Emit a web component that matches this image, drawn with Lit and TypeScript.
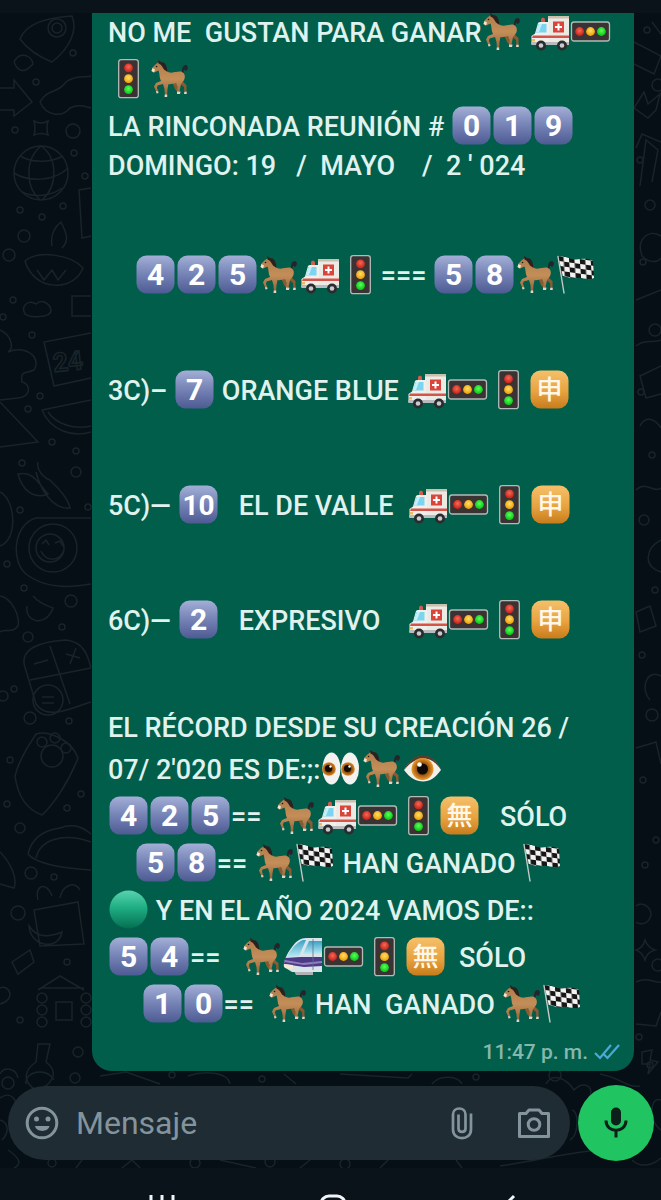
import { LitElement, html, svg, css } from "lit";
import { customElement } from "lit/decorators.js";

const KEYCAPS = ["0", "1", "2", "4", "5", "7", "8", "9", "10"];

/** Picture codes used inside braces in the message source, with their spoken names. */
const EMOJI: Record<string, string> = {
  horse: "caballo",
  amb: "ambulancia",
  hl: "semáforo horizontal",
  vl: "semáforo",
  flag: "bandera a cuadros",
  eyes: "ojos",
  eye: "ojo",
  green: "círculo verde",
  train: "monorriel",
};

const MESSAGE: string[][] = [
  [
    "NO ME  GUSTAN PARA GANAR{horse} {amb}{hl}",
    "{vl}{horse}",
    "LA RINCONADA REUNIÓN # {0}{1}{9}",
    "DOMINGO: 19   /  MAYO    /  2 ' 024",
  ],
  ["    {4}{2}{5}{horse}{amb}{vl}=== {5}{8}{horse}{flag}"],
  ["3C)– {7} ORANGE BLUE {amb}{hl}{vl}{申}"],
  ["5C)— {10}   EL DE VALLE  {amb}{hl}{vl}{申}"],
  ["6C)— {2}   EXPRESIVO    {amb}{hl}{vl}{申}"],
  [
    "EL RÉCORD DESDE SU CREACIÓN 26 /",
    "07/ 2'020 ES DE:;:{eyes}{horse}{eye}",
    "{4}{2}{5}==  {horse}{amb}{hl}{vl}{無}   SÓLO",
    "    {5}{8}== {horse}{flag} HAN GANADO {flag}",
    "{green} Y EN EL AÑO 2024 VAMOS DE::",
    "{5}{4}==   {horse}{train}{hl}{vl}{無}  SÓLO",
    "     {1}{0}==  {horse} HAN  GANADO {horse}{flag}",
  ],
];

const sprite = html`
  <svg class="sprite" aria-hidden="true">
    <defs>
      <linearGradient id="gKey" x2="0" y2="1">
        <stop offset="0" stop-color="#a3afd6" /><stop offset=".5" stop-color="#7482b5" /><stop offset="1" stop-color="#4d5b93" />
      </linearGradient>
      <linearGradient id="gSq" x2="0" y2="1">
        <stop offset="0" stop-color="#f5c06a" /><stop offset=".55" stop-color="#e9a340" /><stop offset="1" stop-color="#c87c1b" />
      </linearGradient>
      <linearGradient id="gGreen" x2="0" y2="1">
        <stop offset="0" stop-color="#58d3ae" /><stop offset=".45" stop-color="#1fae83" /><stop offset="1" stop-color="#046f52" />
      </linearGradient>
      <linearGradient id="gHorse" x2="0" y2="1">
        <stop offset="0" stop-color="#b07c4b" /><stop offset=".5" stop-color="#c48e58" /><stop offset="1" stop-color="#94633a" />
      </linearGradient>
      <linearGradient id="gGlass" x2="0" y2="1">
        <stop offset="0" stop-color="#3f9fc4" /><stop offset="1" stop-color="#b6ecf5" />
      </linearGradient>
      <radialGradient id="gIris"><stop offset="0" stop-color="#5b2b06" /><stop offset=".5" stop-color="#8a4a0c" /><stop offset="1" stop-color="#dd8a23" /></radialGradient>
      <radialGradient id="gRed" cy=".4"><stop offset="0" stop-color="#f46a55" /><stop offset="1" stop-color="#cf2a20" /></radialGradient>
      <radialGradient id="gYel" cy=".4"><stop offset="0" stop-color="#ffe066" /><stop offset="1" stop-color="#f1a70f" /></radialGradient>
      <radialGradient id="gGrn" cy=".4"><stop offset="0" stop-color="#5dff58" /><stop offset="1" stop-color="#10cf1e" /></radialGradient>
      <pattern id="check" width="11" height="9.6" patternUnits="userSpaceOnUse" patternTransform="translate(2 5) rotate(8) skewX(12)">
        <rect width="11" height="9.6" fill="#f2f2f0" />
        <rect width="5.5" height="4.8" fill="#161616" /><rect x="5.5" y="4.8" width="5.5" height="4.8" fill="#161616" />
      </pattern>
      <symbol id="horse" viewBox="0 0 41 47">
        <path d="M33 17C33 13 34 10 37 10C40 11 39 15 37 16C36 16 36 14 35 15C34 16 35 18 34 19Z" fill="#26242a" />
        <path d="M33 26L37.500 30L37.500 38H35.500L35 32L30 28ZM23 27L27 28L29 33L31.500 37L30 39L26 34Z" fill="#8a5a33" />
        <path d="M10 7L12 9C15 11 17 15 19 17C24 19 29 15.500 33 17C36.500 18.500 36.500 23 34.500 26L32 29L31 34L30 38H28L28.500 32L27 28C24 29 21 29.500 19.500 29L18.500 34L18 41H16L15.500 34L14 29L8.500 30.500L8 33L9.500 36.500L7.500 37.500L5 31.500L7 28L12 26C10 22 11 19 9.500 15.500L5 17.500L2.500 16L3.500 12.500L7 9Z" fill="url(#gHorse)" />
        <path d="M9 5L12 7C17 7 18 12 18.500 17L15 14.500C13.500 12 12.500 9.500 9.500 8.500Z" fill="#2c211e" />
        <path d="M3.500 13L6 14.500L5 17.500L2.500 16Z" fill="#eee6da" /><circle cx="7.500" cy="11.500" r=".8" fill="#1c1512" />
        <path d="M7 36L9.200 36.500L9.500 38L7.500 38.500ZM15.800 39.500H18.200V42H15.500ZM28 36.500L31.500 36.800L31 39H28ZM35.400 36.800H37.700V39H35Z" fill="#ded6cc" />
      </symbol>
      <symbol id="amb" viewBox="0 0 41 47">
        <path d="M12 11.500C12 9 16 9 16 11.500V15H12Z" fill="#d55b4c" />
        <path d="M19 8H40V36H19Z" fill="#eceae5" /><path d="M19 8H40V10.500H19Z" fill="#c9bfae" />
        <path d="M9 15Q10 14 11 14H20V37H3Q2 36 2.500 34V28L6 25.500Z" fill="#f1efec" />
        <path d="M9.500 16H17.500V24.500H7Z" fill="#7dd4ee" /><path d="M10 16H13L10 24H7Z" fill="#c2effa" />
        <path d="M24 13.500H35V24.500H24Z" fill="#d9453a" /><path d="M28.500 15.500H30.500V18H33V20H30.500V22.500H28.500V20H26V18H28.500Z" fill="#fff" />
        <path d="M4 27.500H40V30H3Z" fill="#d5544a" /><path d="M2.500 34H40V37H2.500Z" fill="#b9bcbf" /><path d="M3 31H6V33.500H3Z" fill="#f0b95b" />
        <circle cx="12" cy="37.500" r="5" fill="#2b2b2e" /><circle cx="33" cy="37.500" r="5" fill="#2b2b2e" />
        <circle cx="12" cy="37.500" r="2.300" fill="#c8cbd0" /><circle cx="33" cy="37.500" r="2.300" fill="#c8cbd0" />
      </symbol>
      <symbol id="vl" viewBox="0 0 41 47">
        <rect x="10.700" y="4.700" width="19.600" height="38" rx="2.500" fill="#3b3234" stroke="#b3bbb6" stroke-width="1.300" />
        <circle cx="20.500" cy="12.800" r="4.400" fill="url(#gRed)" /><circle cx="20.500" cy="23.700" r="4.400" fill="url(#gYel)" /><circle cx="20.500" cy="34.600" r="4.400" fill="url(#gGrn)" />
      </symbol>
      <symbol id="hl" viewBox="0 0 41 47">
        <rect x="1.500" y="14" width="38" height="19" rx="2.500" fill="#3b3234" stroke="#b3bbb6" stroke-width="1.300" />
        <circle cx="9.600" cy="23.500" r="4.400" fill="url(#gRed)" /><circle cx="20.500" cy="23.500" r="4.400" fill="url(#gYel)" /><circle cx="31.400" cy="23.500" r="4.400" fill="url(#gGrn)" />
      </symbol>
      <symbol id="flag" viewBox="0 0 41 47">
        <path d="M2.500 6C9 3.500 13 9 20 8.500C26 8 31 6.500 37 10L38 27C31 30 27 26 21 27C15 28 11 25 7 26Z" fill="url(#check)" />
        <path d="M2 5.500L8 42" stroke="#c5c8c6" stroke-width="1.400" stroke-linecap="round" />
      </symbol>
      <symbol id="eyes" viewBox="0 0 41 47">
        <ellipse cx="11.500" cy="23.500" rx="9" ry="16" fill="#f4f2f0" /><ellipse cx="30" cy="23.500" rx="9" ry="16" fill="#f4f2f0" />
        <circle cx="9" cy="24" r="6.800" fill="url(#gIris)" /><circle cx="28" cy="24" r="6.800" fill="url(#gIris)" />
        <circle cx="8.500" cy="23.500" r="3.600" fill="#150b06" /><circle cx="27.500" cy="23.500" r="3.600" fill="#150b06" />
        <circle cx="10.500" cy="21.500" r="1.200" fill="#fff" /><circle cx="29.500" cy="21.500" r="1.200" fill="#fff" />
      </symbol>
      <symbol id="eye" viewBox="0 0 41 47">
        <path d="M2 25C8 15 14 11 21 11S34 15 39 25C33 33 28 36.500 21 36.500S8 33 2 25Z" fill="#f3efe9" />
        <path d="M2 25C8 14 14 10.500 21 10.500S34 14 39 25C34 17 28 13.500 21 13.500S8 18 2 25Z" fill="#5a3b2b" />
        <circle cx="20.500" cy="24" r="11" fill="#df9028" /><circle cx="20.500" cy="24" r="10" fill="url(#gIris)" />
        <circle cx="20.500" cy="24" r="5.500" fill="#0f0a07" /><circle cx="17.500" cy="19.500" r="2.300" fill="#fff" />
      </symbol>
      <symbol id="green" viewBox="0 0 41 47"><circle cx="20.500" cy="23.500" r="19" fill="url(#gGreen)" /></symbol>
      <symbol id="train" viewBox="0 0 41 47">
        <path d="M12 38H31V42H14Z" fill="#aeb3b8" />
        <path d="M40 5V39H10L2 34C1 29 5 20 10 14C14 8 19 5 24 5Z" fill="#d9e3ea" />
        <path d="M21 7C15 9 9 16 5 24L17 23L24 7Z" fill="url(#gGlass)" /><path d="M27 8H40V21H21Z" fill="url(#gGlass)" />
        <path d="M3 25L18 24H40V33L22 34L2 31Z" fill="#4c3a86" /><path d="M3 27L20 30L40 28V30L22 32L2.500 29Z" fill="#8f7fc0" />
        <path d="M2 31L11 32L11 36L3 35Z" fill="#f2eccb" /><path d="M31 6V37" stroke="#5d6f8c" stroke-width=".8" />
      </symbol>
    </defs>
  </svg>
`;

const emoji = (code: string) => {
  if (KEYCAPS.includes(code)) {
    const size = code.length > 1 ? "digit pair" : "digit";
    return html`<svg class="emoji" viewBox="0 0 41 47"><rect x="1.500" y="4.500" width="38" height="38" rx="10" fill="url(#gKey)" /><text class=${size} x="20.500" y="34">${code}</text></svg>`;
  }
  if (code === "申" || code === "無") {
    return html`<svg class="emoji" viewBox="0 0 41 47"><rect x="1.500" y="4.500" width="38" height="38" rx="10" fill="url(#gSq)" /><text class="kanji" x="20.500" y="33">${code}</text></svg>`;
  }
  return html`<svg class="emoji" viewBox="0 0 41 47" role="img" aria-label=${EMOJI[code]}><use href="#${code}" /></svg>`;
};

const line = (source: string) =>
  html`<span class="line">${source
    .split(/(\{[^}]+\})/)
    .filter(Boolean)
    .map((part) => (part[0] === "{" ? emoji(part.slice(1, -1)) : part))}</span>`;

const DOTS = [
  [73, 53], [36, 82], [73, 131, 7], [15, 130], [74, 153], [85, 176], [20, 210], [42, 217], [63, 206], [24, 236, 6], [9, 255, 6], [13, 300],
  [32, 335], [3, 317], [40, 396], [28, 409], [52, 442], [76, 451], [76, 472, 5], [22, 463], [20, 510], [88, 507], [7, 564], [24, 588],
  [71, 601, 6], [28, 637, 5], [62, 627], [14, 689], [30, 718, 6], [69, 721], [3, 696, 5], [10, 760], [81, 794], [67, 808], [7, 804],
  [20, 828, 5], [31, 873, 6], [54, 877], [18, 913, 7], [67, 962], [20, 1020], [78, 1052, 5], [8, 1083, 6],
  [647, 30], [658, 85, 6], [640, 160], [650, 205, 5], [643, 262], [655, 330, 6], [641, 392], [652, 455], [644, 520, 5], [655, 590],
  [642, 655], [652, 715, 6], [643, 780], [656, 840], [645, 865], [658, 965, 6], [639, 1037], [650, 1065],
  [75, 1078, 5], [172, 1075], [262, 1079], [345, 1164, 5], [476, 1077], [555, 1075, 6], [52, 1163, 4], [195, 1163, 5], [270, 1162, 5],
];

const wallpaper = html`
  <svg class="wallpaper" viewBox="0 0 661 1200" preserveAspectRatio="xMidYMax slice" aria-hidden="true">
    ${DOTS.map(([x, y, r = 3]) => svg`<circle cx=${x} cy=${y} r=${r} />`)}
    <path d="M20 39C26 24 44 18 72 16C78 30 70 48 52 62C42 58 28 50 20 39ZM14 62C20 50 32 56 33 64C24 74 18 72 14 62" />
    <circle cx="57" cy="28" r="9" /><circle cx="57" cy="28" r="5" />
    <path d="M0 88H14V80L32 102L14 116V110H0M40 102C48 88 58 94 66 82C76 74 86 78 91 76M40 102C46 116 62 118 70 108C78 104 84 106 91 108" />
    <path d="M34 121Q41 125 48 121Q46 128 48 135Q41 132 34 135Q36 128 34 121Z" />
    <circle cx="41" cy="173" r="27" /><path d="M14 173C28 182 54 182 68 168M20 156C34 164 52 162 63 156M22 192C34 198 52 196 62 188M41 146C24 160 26 188 40 200M41 146C58 158 58 186 42 200" />
    <path d="M91 188L79 190L82 238L91 236M25 261C38 250 70 254 83 268C74 292 34 292 25 261ZM52 246C50 234 56 226 61 222C66 232 70 240 62 248M37 270L44 280L52 270L58 280L66 270" />
    <path d="M25 314C20 304 30 300 36 304C42 298 50 304 51 310C52 318 30 318 25 314ZM91 296H72V316H91" />
    <path d="M91 333L44 342L54 386L91 378M0 330C12 336 14 348 8 352C26 344 42 358 34 370C26 374 20 370 22 382C32 384 30 398 18 398L0 400M0 402L38 442L0 447" />
    <text class="day" x="54" y="372" transform="rotate(-6 54 372)">24</text>
    <path d="M42 410L91 400M42 410C50 430 72 438 91 432M48 412C56 424 74 430 91 426M38 462C36 470 44 478 50 480C58 488 68 498 70 508C52 510 40 488 36 472M18 474C34 470 40 486 48 494C34 500 22 490 18 474Z" />
    <path d="M0 492C16 500 18 540 0 546M91 518H36C14 524 10 560 26 574C44 588 70 588 91 584" /><circle cx="53" cy="548" r="24" /><circle cx="50" cy="548" r="14" />
    <path d="M42 544L46 540L49 545M55 543L60 541L63 546M41 551C46 562 60 562 64 550M33 596C40 604 48 606 53 608C46 628 24 622 27 606M0 596C12 598 20 616 18 626C12 634 6 628 0 632" />
    <path d="M24 664C22 650 36 642 66 640C84 642 88 656 91 668M24 664L36 704C48 722 76 706 91 702M50 646L70 704M30 680L91 668M34 664L48 660M66 654L80 658M76 648L70 664" />
    <circle cx="48" cy="700" r="15" /><path d="M42 697H54M42 703H54" />
    <path d="M15 776C20 756 30 744 36 734C48 730 72 740 78 758C68 784 52 806 42 815C28 810 18 798 15 776Z" /><circle cx="52" cy="756" r="11" /><circle cx="42" cy="742" r="5" /><circle cx="55" cy="738" r="5" /><circle cx="66" cy="748" r="5" />
    <path d="M28 854C32 836 46 830 60 828C76 822 86 830 91 834M28 854C36 864 60 868 91 870M36 858C40 840 62 832 91 842M0 852C10 862 18 878 14 888L0 884" />
    <path d="M34 910L78 902L84 944L40 946L34 910ZM60 898C62 886 74 880 80 890M38 900C34 886 46 880 52 896M29 926C38 940 52 936 62 932C58 952 30 946 29 926Z" />
    <path d="M12 962L30 950L34 962L18 974ZM38 990L60 976L84 990M40 988H84M56 1002H72V1020H56Z" /><circle cx="42" cy="998" r="5" /><circle cx="42" cy="1010" r="5" /><circle cx="42" cy="1022" r="5" /><circle cx="86" cy="998" r="5" /><circle cx="86" cy="1010" r="5" /><circle cx="86" cy="1022" r="5" />
    <path d="M38 1044L50 1044L46 1062C60 1072 52 1086 36 1090C22 1082 24 1070 36 1062ZM0 988C10 984 16 1000 0 1004" />
    <path d="M661 34L652 22M634 42L661 56L654 74L634 64M634 108L644 92L648 104L660 94L656 110L648 118ZM636 148L642 134L661 142M640 186L646 140L658 150L652 182" />
    <path d="M661 236C648 228 636 240 642 256C650 264 658 262 661 258M636 300L661 290M636 346C646 338 654 344 661 340M661 366L640 376L646 398L661 394M640 426C646 414 656 420 661 428M636 490C646 480 654 494 661 488M661 540C646 548 642 566 661 572M636 612L650 606L656 626L640 632ZM661 676C646 668 640 690 650 700M636 748L656 742L661 764" />
    <path d="M636 906C644 900 654 910 650 918C646 926 638 924 636 922M645 940Q648 948 655 950Q647 952 645 960Q642 952 636 950Q643 948 645 940ZM636 982C648 976 656 984 661 982M636 1024L656 1026L661 1012M642 1052L652 1050L650 1060L658 1062L648 1074L650 1064L642 1064Z" />
    <path d="M0 1074C4 1066 16 1068 18 1078M26 1084C24 1072 46 1066 54 1080M100 1076L126 1072L160 1084M188 1076C204 1070 228 1072 230 1084M284 1074L296 1084M340 1074L408 1078L412 1074M432 1084C440 1074 458 1076 462 1084M546 1084C552 1072 566 1078 574 1090C582 1082 594 1084 590 1096M600 1074C622 1078 626 1088 640 1086" />
    <path d="M0 1098C10 1090 20 1100 14 1112M0 1120C8 1122 10 1132 2 1140M8 1150C20 1158 22 1164 14 1168M76 1168L82 1160M122 1168L132 1160L140 1168M220 1160L256 1168M300 1168L310 1160M380 1168L388 1160M456 1160L462 1168M500 1166C540 1160 570 1152 600 1150M572 1110C580 1112 578 1136 570 1140M661 1100C648 1096 650 1124 661 1130M632 1160C640 1168 652 1166 661 1158" />
  </svg>
`;

@customElement("app-root")
export class AppRoot extends LitElement {
  static styles = css`
    :host {
      display: flex;
      flex-direction: column;
      height: 100vh;
      overflow: hidden;
      background: #0a131a;
      color: #e0f2ee;
      font-family: Roboto, "Noto Sans CJK JP", sans-serif;
    }
    .sprite {
      position: absolute;
      width: 0;
      height: 0;
    }
    .header {
      flex: none;
      height: 13px;
      background: #0a121a;
    }
    .chat {
      position: relative;
      flex: 1;
      min-height: 0;
      display: flex;
      flex-direction: column;
      justify-content: flex-end;
      overflow: hidden;
      background: #060f15;
    }
    .wallpaper {
      position: absolute;
      left: 0;
      bottom: -32px;
      width: 100%;
      height: 100vh;
      fill: none;
      stroke: #18242a;
      stroke-width: 1.5;
    }
    .day {
      font-size: 26px;
      font-weight: 700;
    }
    .bubble {
      position: relative;
      margin: 0 27px 14px 92px;
      padding: 0 14px 6px 16px;
      border-radius: 0 0 20px 20px;
      background: #005e4b;
    }
    .text {
      display: flex;
      flex-direction: column;
      gap: 68px;
    }
    .paragraph {
      margin: 0;
      font-size: 27px;
      font-weight: 500;
      line-height: 34px;
      white-space: pre;
    }
    .line {
      display: block;
    }
    .emoji {
      width: 41px;
      height: 47px;
      vertical-align: -13px;
    }
    .digit {
      fill: #fff;
      font-size: 30px;
      font-weight: 700;
      text-anchor: middle;
    }
    .pair {
      font-size: 28px;
    }
    .kanji {
      fill: #fff8ea;
      font-family: "Noto Sans CJK JP", sans-serif;
      font-size: 26px;
      font-weight: 500;
      text-anchor: middle;
    }
    .meta {
      display: flex;
      justify-content: flex-end;
      align-items: center;
      gap: 6px;
      margin-top: 12px;
      font-size: 21px;
      font-weight: 500;
      line-height: 26px;
      color: #86b7ab;
    }
    .ticks {
      width: 26px;
      height: 20px;
      fill: none;
      stroke: #4ba9d8;
      stroke-width: 2.2;
    }
    .composer {
      position: relative;
      flex: none;
      display: flex;
      align-items: center;
      gap: 8px;
      padding: 0 7px 7px 8px;
    }
    .field {
      flex: 1;
      min-width: 0;
      display: flex;
      align-items: center;
      height: 74px;
      padding: 0 18px 0 16px;
      border-radius: 37px;
      background: #1f2c34;
      box-sizing: border-box;
    }
    button {
      flex: none;
      display: flex;
      align-items: center;
      justify-content: center;
      padding: 0;
      border: 0;
      background: none;
      color: #84949c;
    }
    .tool {
      width: 36px;
      height: 36px;
    }
    .camera {
      margin-left: 36px;
    }
    .icon {
      width: 36px;
      height: 36px;
      fill: none;
      stroke: currentColor;
      stroke-width: 3;
    }
    input {
      flex: 1;
      min-width: 0;
      margin: 0 16px;
      padding: 0;
      border: 0;
      outline: 0;
      background: none;
      color: #e9edef;
      font: 32px/40px Roboto, sans-serif;
    }
    input::placeholder {
      color: #84949c;
      opacity: 1;
    }
    .mic {
      width: 76px;
      height: 76px;
      border-radius: 50%;
      background: #20c461;
      color: #0a2018;
    }
    .nav {
      flex: none;
      box-sizing: border-box;
      height: 32px;
      padding: 26px 0 0 5px;
      display: flex;
      justify-content: center;
      align-items: flex-start;
      background: #0a121a;
      overflow: hidden;
    }
    .nav button {
      width: 171px;
      color: #f2f5f7;
    }
    .navicon {
      width: 28px;
      height: 28px;
      fill: none;
      stroke: currentColor;
      stroke-width: 3;
    }
  `;

  render() {
    return html`
      ${sprite}
      <header class="header"></header>
      <main class="chat">
        ${wallpaper}
        <article class="bubble">
          <div class="text">${MESSAGE.map((p) => html`<p class="paragraph">${p.map(line)}</p>`)}</div>
          <div class="meta">
            <time>11:47 p. m.</time>
            <svg class="ticks" viewBox="0 0 26 20" role="img" aria-label="Leído"><path d="M1 11L6 16L17 3M10 12.500L13.500 16L25 3" /></svg>
          </div>
        </article>
        <form class="composer">
          <div class="field">
            <button class="tool" type="button" aria-label="Emojis">
              <svg class="icon" viewBox="0 0 36 36">
                <circle cx="18" cy="18" r="14.800" />
                <circle cx="12.500" cy="14" r="2.500" fill="currentColor" stroke="none" /><circle cx="24" cy="14" r="2.500" fill="currentColor" stroke="none" />
                <path d="M11 21H25.500C24 27.500 12.500 27.500 11 21Z" fill="currentColor" stroke="none" />
              </svg>
            </button>
            <input type="text" aria-label="Mensaje" placeholder="Mensaje" />
            <button class="tool" type="button" aria-label="Adjuntar">
              <svg class="icon" viewBox="0 0 36 36"><path d="M27 8.500V24.500C27 36 9 36 9 24.500V9.500C9 1.500 21.500 1.500 21.500 9.500V23.500C21.500 28 14.500 28 14.500 23.500V9.500" stroke-width="2.700" /></svg>
            </button>
            <button class="tool camera" type="button" aria-label="Cámara">
              <svg class="icon" viewBox="0 0 36 36"><path d="M3.500 8.500H10L13 5H23L26 8.500H32.500V31.500H3.500Z" stroke-linejoin="round" /><circle cx="18" cy="19.500" r="5.800" /></svg>
            </button>
          </div>
          <button class="mic" type="button" aria-label="Grabar">
            <svg class="icon" viewBox="0 0 36 36"><rect x="13" y="2.500" width="10" height="18" rx="5" fill="currentColor" stroke="none" /><path d="M8 15.500C8 28.500 28 28.500 28 15.500M18 25V32.500" /></svg>
          </button>
        </form>
      </main>
      <nav class="nav">
        <button type="button" aria-label="Recientes"><svg class="navicon" viewBox="0 0 28 28"><path d="M3 1V26M14 1V26M25 1V26" /></svg></button>
        <button type="button" aria-label="Inicio"><svg class="navicon" viewBox="0 0 28 28"><rect x="2" y="2" width="24" height="24" rx="8" /></svg></button>
        <button type="button" aria-label="Atrás"><svg class="navicon" viewBox="0 0 28 28"><path d="M24 2L12 14L24 26" /></svg></button>
      </nav>
    `;
  }
}
